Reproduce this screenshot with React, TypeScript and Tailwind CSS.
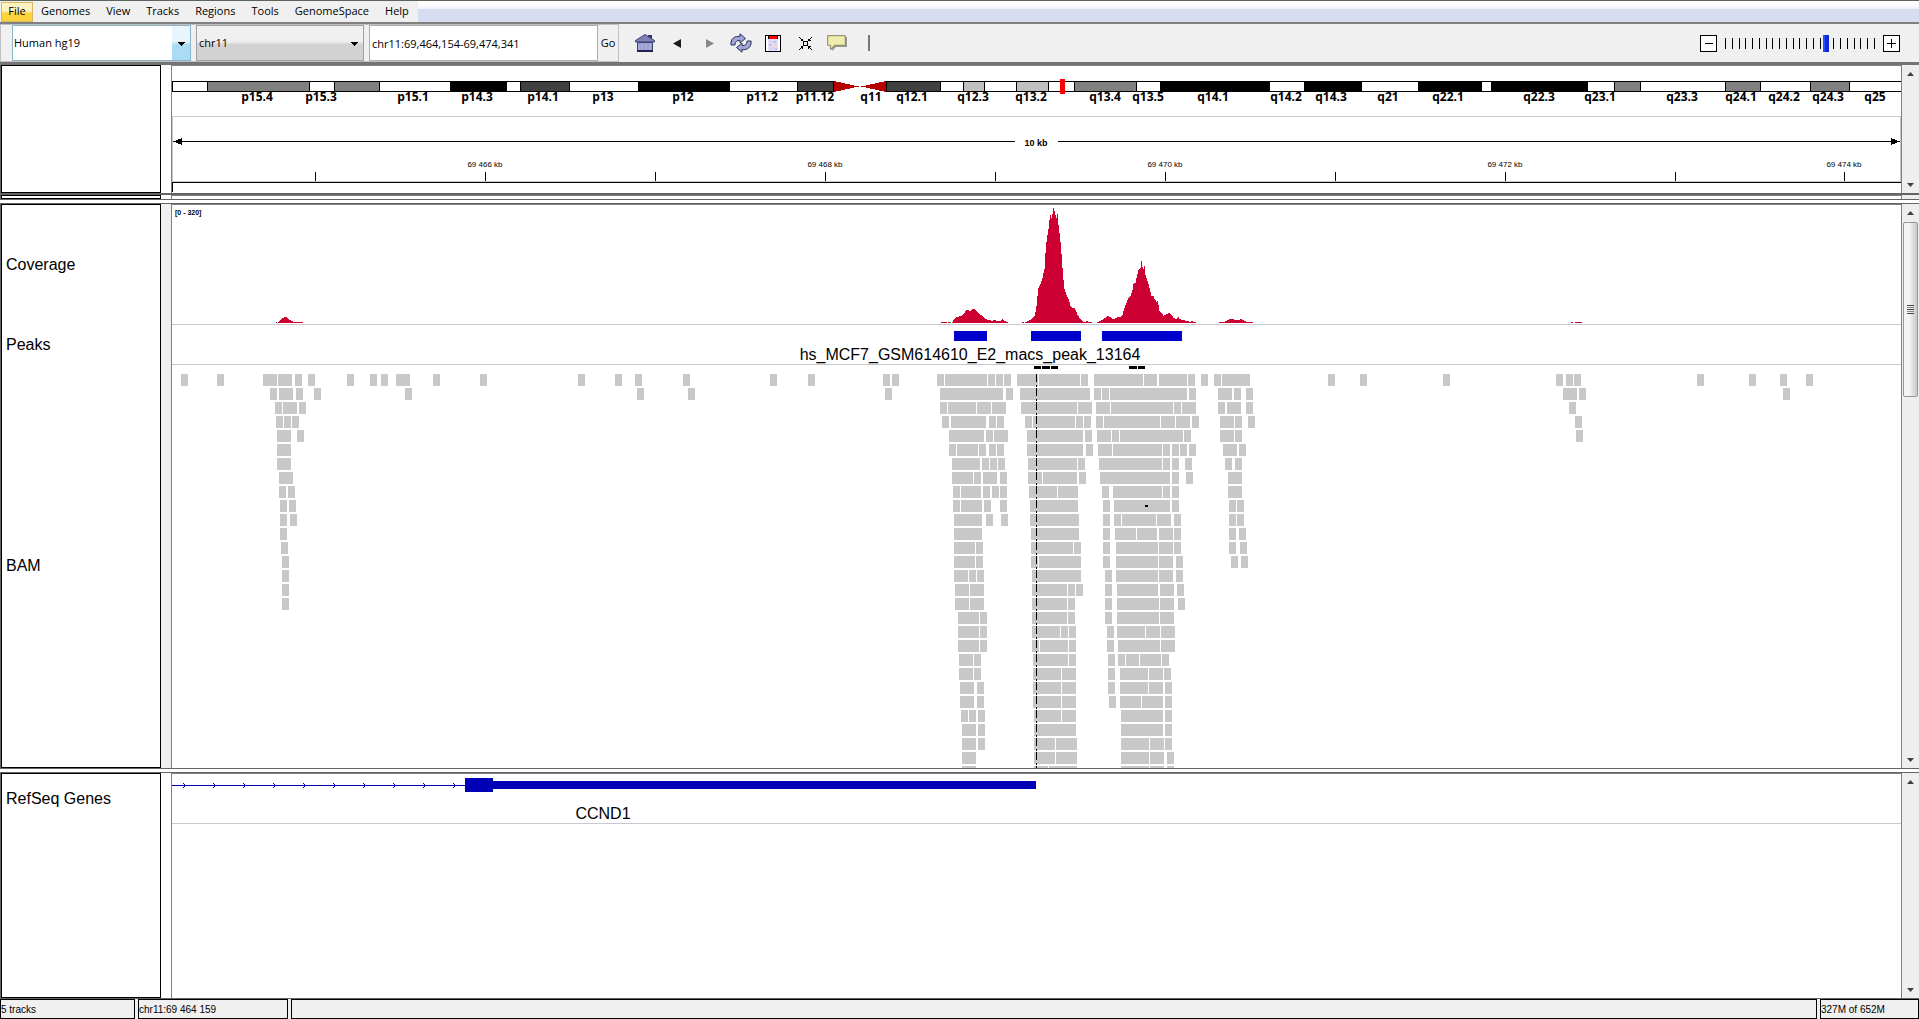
import type { ReactNode } from 'react';

// Genomic viewport: screen columns 172..1901 are mapped to percentages so tracks follow the window
const VIEW_START = 172;
const VIEW_WIDTH = 1729;

const at = (x: number) => `${((x - VIEW_START) / VIEW_WIDTH) * 100}%`;
const span = (w: number) => `${(w / VIEW_WIDTH) * 100}%`;

const menus = ['Genomes', 'View', 'Tracks', 'Regions', 'Tools', 'GenomeSpace', 'Help'];

// [start, end, stain]
const bands: [number, number, string][] = [
  [207, 310, '#808080'],
  [334, 380, '#808080'],
  [450, 507, '#000000'],
  [520, 570, '#404040'],
  [638, 730, '#000000'],
  [797, 834, '#404040'],
  [886, 941, '#404040'],
  [963, 985, '#c0c0c0'],
  [1016, 1049, '#c0c0c0'],
  [1074, 1137, '#808080'],
  [1160, 1270, '#000000'],
  [1304, 1362, '#000000'],
  [1418, 1482, '#000000'],
  [1491, 1588, '#000000'],
  [1614, 1641, '#808080'],
  [1725, 1761, '#808080'],
  [1810, 1850, '#808080'],
];

const bandLabels: [number, string][] = [
  [257, 'p15.4'], [321, 'p15.3'], [413, 'p15.1'], [477, 'p14.3'], [543, 'p14.1'], [603, 'p13'],
  [683, 'p12'], [762, 'p11.2'], [815, 'p11.12'], [871, 'q11'], [912, 'q12.1'], [973, 'q12.3'],
  [1031, 'q13.2'], [1105, 'q13.4'], [1148, 'q13.5'], [1213, 'q14.1'], [1286, 'q14.2'], [1331, 'q14.3'],
  [1388, 'q21'], [1448, 'q22.1'], [1539, 'q22.3'], [1600, 'q23.1'], [1682, 'q23.3'], [1741, 'q24.1'],
  [1784, 'q24.2'], [1828, 'q24.3'], [1875, 'q25'],
];

const rulerTicks: [number, string][] = [
  [315, ''], [485, '69 466 kb'], [655, ''], [825, '69 468 kb'], [995, ''],
  [1165, '69 470 kb'], [1335, ''], [1505, '69 472 kb'], [1675, ''], [1844, '69 474 kb'],
];

// [x, height] samples, interpolated between neighbours of the same run
const coverage: [number, number][][] = [
  [[276, 1], [276, 1]],
  [[278, 1], [279, 2], [280, 3], [281, 4], [283, 5], [285, 6], [287, 5], [289, 3], [291, 2], [293, 1], [302, 1]],
  [[941, 1], [946, 1]],
  [[948, 1], [950, 1]],
  [[952, 1], [953, 3], [955, 5], [957, 6], [961, 7], [963, 9], [966, 13], [970, 12], [972, 14], [974, 14], [976, 12],
    [979, 9], [982, 7], [985, 4], [988, 3], [992, 2], [994, 3], [996, 2], [1000, 2], [1002, 4], [1004, 2], [1007, 1]],
  [[1022, 1], [1023, 1]],
  [[1025, 1], [1028, 2], [1030, 3], [1032, 5], [1034, 7], [1035, 11], [1036, 17], [1037, 27], [1038, 35], [1040, 39],
    [1042, 45], [1044, 54], [1045, 70], [1046, 81], [1047, 88], [1048, 94], [1049, 103], [1050, 108], [1051, 105],
    [1052, 109], [1053, 115], [1054, 112], [1055, 108], [1056, 105], [1057, 109], [1058, 98], [1059, 90], [1060, 81],
    [1061, 69], [1062, 55], [1063, 43], [1064, 34], [1066, 28], [1068, 24], [1070, 17], [1072, 15], [1074, 15],
    [1075, 13], [1077, 8], [1079, 5], [1081, 3], [1083, 1], [1085, 1], [1087, 2], [1088, 1], [1091, 1]],
  [[1097, 1], [1100, 2], [1103, 4], [1105, 5], [1107, 7], [1110, 6], [1112, 4], [1114, 4], [1117, 6], [1120, 6],
    [1122, 8], [1124, 15], [1126, 20], [1128, 25], [1130, 27], [1132, 33], [1133, 39], [1135, 40], [1136, 45],
    [1138, 53], [1140, 55], [1141, 62], [1142, 56], [1143, 54], [1144, 57], [1145, 48], [1147, 42], [1149, 35],
    [1151, 27], [1153, 27], [1154, 24], [1156, 21], [1157, 22], [1158, 18], [1159, 12], [1161, 10], [1163, 7],
    [1165, 8], [1169, 10], [1171, 8], [1173, 5], [1176, 4], [1178, 6], [1179, 4], [1182, 3], [1186, 2], [1190, 1],
    [1191, 2], [1193, 1], [1195, 1]],
  [[1219, 1], [1224, 1], [1226, 2], [1229, 4], [1232, 4], [1234, 3], [1238, 3], [1241, 4], [1242, 3], [1244, 2], [1246, 1], [1252, 1]],
  [[1571, 1], [1572, 1]],
  [[1575, 1], [1581, 1]],
];

const columns = coverage.flatMap((run) => {
  const out: [number, number][] = [];
  run.forEach(([x, h], i) => {
    const next = run[i + 1];
    if (!next) {
      out.push([x, h]);
      return;
    }
    for (let c = x; c < next[0]; c++) {
      out.push([c, Math.round(h + ((next[1] - h) * (c - x)) / (next[0] - x))]);
    }
  });
  return out;
});

// Aligned reads, one string per packed row, as start-end pairs
const READ_OFFSET = 920;
const packedRows = [
  '17-24 25-67 68-75 76-83 84-91 97-118 119-160 161-168 174-223 224-237 239-267 268-275 281-288 294-301 302-330',
  '20-83 86-93 100-170 174-181 182-189 190-267 269-276 298-312 314-321 326-333',
  '20-27 28-56 57-71 72-86 101-157 158-172 176-190 191-253 254-261 262-276 298-305 307-321 326-333',
  '22-29 31-66 69-76 77-84 105-112 113-155 156-163 164-171 176-183 184-240 241-255 256-270 272-279 300-314 315-322 328-335',
  '29-64 66-73 74-88 107-163 165-172 177-191 192-199 200-263 264-271 300-314 315-322',
  '29-36 37-58 59-66 69-76 77-84 107-163 166-173 178-192 193-242 243-250 252-259 260-267 269-276 303-317 319-326',
  '32-60 62-69 70-77 78-85 108-157 158-165 179-242 243-250 252-259 265-272 305-312 315-322',
  '32-53 54-61 63-77 80-87 108-122 123-157 159-166 180-250 252-259 266-273 308-322',
  '33-40 41-61 63-70 72-79 80-87 109-137 138-158 182-189 193-242 243-250 252-259 308-322',
  '33-40 41-62 64-71 80-87 110-158 183-190 194-250 252-259 309-316 317-324',
  '34-62 66-73 81-88 110-159 183-190 194-201 202-236 237-251 254-261 309-316 317-324',
  '34-62 111-159 183-190 195-216 217-237 239-253 254-261 309-316 319-326',
  '34-55 56-63 111-153 154-161 183-190 196-238 239-253 254-261 309-316 320-327',
  '34-55 56-63 111-118 119-161 183-190 196-238 239-253 256-263 311-318 321-328',
  '34-48 49-56 57-64 112-161 185-192 196-238 239-253 256-263',
  '35-49 50-64 112-147 148-155 156-163 185-192 197-238 240-254 257-264',
  '35-49 50-64 112-147 148-155 185-192 197-239 240-254 258-265',
  '38-59 60-67 112-147 148-155 185-192 197-239 240-254',
  '38-59 60-67 112-140 141-148 149-156 187-194 197-225 226-240 241-255',
  '38-59 60-67 112-119 120-148 149-156 187-194 198-240 241-255',
  '39-53 54-61 113-148 149-156 188-195 198-205 206-219 220-241 242-249',
  '39-53 54-61 113-141 142-156 188-195 200-228 229-243 244-251',
  '40-54 57-64 113-141 142-156 188-195 200-228 229-243 245-252',
  '40-54 57-64 113-141 142-156 189-196 200-221 222-243 245-252',
  '41-48 49-56 58-65 114-141 142-156 201-243 245-252',
  '42-56 58-65 114-156 201-243 245-252',
  '42-56 58-65 114-135 136-157 201-229 230-244 245-252',
  '42-56 114-135 136-157 201-229 230-244 247-254',
  '42-56 114-128 129-157 201-229 230-244 247-254',
];

// Reads outside the three enriched regions: starts of single (7) and doubled (14) reads per row
const sparseSingles = [
  [181, 217, 295, 308, 347, 370, 381, 433, 480, 578, 615, 635, 683, 770, 808, 883, 892, 1328, 1360, 1443, 1556, 1566, 1574, 1697, 1749, 1780, 1806],
  [270, 296, 314, 405, 637, 688, 885, 1579, 1783],
  [275, 299, 1569],
  [276, 284, 292, 1575],
  [297, 1576],
  [], [], [],
  [279, 288], [280, 289], [280, 290], [280], [281], [282], [282], [282], [282],
];
const sparseDoubles = [[263, 278, 396], [279, 1563], [283], [], [277], [277], [277], [279]];

const reads: { x: number; w: number; row: number }[] = [
  ...packedRows.flatMap((line, row) =>
    line.split(' ').map((pair) => {
      const [start, end] = pair.split('-').map(Number);
      return { x: READ_OFFSET + start, w: end - start, row };
    })
  ),
  ...sparseSingles.flatMap((starts, row) => starts.map((x) => ({ x, w: 7, row }))),
  ...sparseDoubles.flatMap((starts, row) => starts.map((x) => ({ x, w: 14, row }))),
];

function ArrowDown({ className }: { className: string }) {
  return (
    <svg className={className} width="7" height="4" viewBox="0 0 7 4" shapeRendering="crispEdges">
      <path d="M0 0h7v1h-1v1h-1v1h-1v1h-1v-1h-1v-1h-1v-1h-1z" fill="#000" />
    </svg>
  );
}

function ToolButton({ label, children }: { label: string; children: ReactNode }) {
  return (
    <button type="button" aria-label={label} className="w-8 h-8 flex items-center justify-center">
      {children}
    </button>
  );
}

function MenuBar() {
  return (
    <nav className="h-6 flex-none flex border-t border-[#5c655c] border-b-2 border-b-[#808080] bg-linear-to-b from-[#fdfdff] from-20% via-[#eef1fa] via-38% to-[#d7ddf0] to-40% text-[11px] text-black">
      <div className="flex items-center bg-[#f0f0f0] px-px">
        <button type="button" className="h-5 w-8 border border-[#d8b860] bg-linear-to-b from-[#fdf3c0] from-45% to-[#fdd33c] to-55%">
          File
        </button>
        <div className="flex gap-4 px-2">
          {menus.map((menu) => (
            <button type="button" key={menu}>{menu}</button>
          ))}
        </div>
      </div>
    </nav>
  );
}

function ZoomSlider() {
  return (
    <div className="flex items-center gap-2 pr-[19px]">
      <button type="button" aria-label="Zoom out" className="w-[17px] h-[17px] border border-black bg-white flex items-center justify-center">
        <span className="w-2 h-px bg-black" />
      </button>
      <div className="relative w-[150px] h-[17px]">
        <svg className="absolute left-0 top-[3px] w-full h-[11px]" shapeRendering="crispEdges">
          {Array.from({ length: 23 }, (_, i) => (
            <rect key={i} x={Math.round(i * 6.77)} y="0" width="1" height="11" fill="#000" />
          ))}
        </svg>
        <input
          type="range"
          aria-label="Zoom level"
          min={0}
          max={22}
          defaultValue={15}
          className="absolute inset-0 w-full h-full appearance-none bg-transparent [&::-webkit-slider-thumb]:appearance-none [&::-webkit-slider-thumb]:w-[6px] [&::-webkit-slider-thumb]:h-[17px] [&::-webkit-slider-thumb]:bg-[#1428dc] [&::-webkit-slider-thumb]:border-l-2 [&::-webkit-slider-thumb]:border-[#2850ff]"
        />
      </div>
      <button type="button" aria-label="Zoom in" className="w-[17px] h-[17px] border border-black bg-white flex items-center justify-center">
        <svg width="9" height="9" shapeRendering="crispEdges">
          <path d="M4 0h1v4h4v1h-4v4h-1v-4h-4v-1h4z" fill="#000" />
        </svg>
      </button>
    </div>
  );
}

function Toolbar() {
  return (
    <div className="h-[41px] flex-none flex items-center bg-[#f0f0f0] border-b-[3px] border-[#747474] text-[11px] text-black">
      <div className="h-full flex items-center border border-[#c0c0c0] pl-[11px]">
        <div className="relative w-[179px] h-9 border border-[#8ab4cc] bg-white">
          <select aria-label="Genome" className="appearance-none w-full h-full px-px outline-none">
            <option>Human hg19</option>
          </select>
          <div className="pointer-events-none absolute right-0 inset-y-0 w-[18px] bg-linear-to-b from-[#e8f5fc] from-45% to-[#aadcf5] to-55%" />
          <ArrowDown className="pointer-events-none absolute right-[5px] top-4" />
        </div>
        <div className="relative w-[168px] h-9 ml-[5px] border border-[#a0a0a0] bg-linear-to-b from-[#f0f0f0] from-45% to-[#d2d2d2] to-55%">
          <select aria-label="Chromosome" className="appearance-none w-full h-full px-[2px] outline-none">
            <option>chr11</option>
          </select>
          <ArrowDown className="pointer-events-none absolute right-[5px] top-4" />
        </div>
        <input
          aria-label="Locus"
          defaultValue="chr11:69,464,154-69,474,341"
          className="w-[229px] h-9 ml-[5px] px-[2px] bg-white border border-[#abadb3] outline-none"
        />
        <button type="button" className="w-5 h-9">Go</button>
      </div>
      <div className="flex items-center pl-[10px]">
        <ToolButton label="Home">
          <svg width="22" height="18" viewBox="0 0 22 18">
            <path d="M14 1h4v5h-4z" fill="#34346a" />
            <path d="M11 .5 20.500 6.500v1.500h-19v-1.500z" fill="#7c80b4" stroke="#3c4070" />
            <path d="M3.500 8.500h15v9h-15z" fill="#9c9fd0" stroke="#3c4070" />
            <path d="M5 17v-6m3 6v-8m4 8v-8m4 8v-8" stroke="#b0b4e0" />
            <path d="M3 17h16" stroke="#20244c" strokeWidth="2" />
          </svg>
        </ToolButton>
        <ToolButton label="Back">
          <svg width="9" height="9"><path d="M0 4.500 8 0v9z" fill="#1c1c1c" /></svg>
        </ToolButton>
        <ToolButton label="Forward">
          <svg width="9" height="9"><path d="M9 4.500 1 0v9z" fill="#888" /></svg>
        </ToolButton>
        <ToolButton label="Refresh">
          <svg width="22" height="20" viewBox="0 0 22 20" fill="#a0a4d8" stroke="#2c3058" strokeLinejoin="round">
            <path d="M1 12C0 6 5 2.500 10 3.500V.8L15.500 5.500 10 10V7.500C7 7 5 9 5 12z" />
            <path d="M21 8C22 14 17 17.500 12 16.500v2.700L6.500 14.500 12 10v2.500C15 13 17 11 17 8z" />
          </svg>
        </ToolButton>
        <ToolButton label="Region of interest">
          <svg width="16" height="17" viewBox="0 0 16 17" shapeRendering="crispEdges">
            <path d="M0 0h16v17H0z" fill="#000" />
            <path d="M1 1h14v15H1z" fill="#fff" />
            <path d="M3 1h10v15H3z" fill="#dde0f8" />
            <path d="M4 6h3v2H4zM9 9h3v2H9zM5 12h4v2H5z" fill="#f8c8cc" />
            <path d="M8 6h3v2H8zM4 9h3v2H4zM10 13h2v2h-2z" fill="#b8c4f4" />
            <path d="M4 1h8v3H4z" fill="#f00" />
            <path d="M3 0h1v4H3zM12 0h1v4h-1z" fill="#000" />
          </svg>
        </ToolButton>
        <ToolButton label="Fit to window">
          <svg width="13" height="13" viewBox="0 0 13 13" fill="none" stroke="#000" shapeRendering="crispEdges">
            <path d="M4.500 4.500h4v4h-4z" />
            <path d="M0 0 4 4M13 0 9 4M0 13 4 9M13 13 9 9M1.500 3.500h2v-2M11.500 3.500h-2v-2M1.500 9.500h2v2M11.500 9.500h-2v2" />
          </svg>
        </ToolButton>
        <ToolButton label="Popup text">
          <svg width="20" height="16" viewBox="0 0 20 16">
            <path d="M2 2h18v10H9l-4 4z" fill="#989898" />
            <path d="M.7.700h17.600v9.600H7.500L3.500 14.500V10.300H.7z" fill="#f0ecae" stroke="#88865c" />
          </svg>
        </ToolButton>
        <div className="w-8 flex justify-center"><span className="w-[2px] h-4 bg-[#787878]" /></div>
      </div>
      <div className="flex-1" />
      <ZoomSlider />
    </div>
  );
}

function Ruler() {
  return (
    <svg className="block w-full h-[126px]" shapeRendering="crispEdges">
      <rect x="0" y="15" width="100%" height="11" fill="#000" />
      <rect x={at(173)} y="16" width={span(1728)} height="9" fill="#fff" />
      {bands.map(([start, end, fill]) => (
        <g key={start}>
          <rect x={at(start)} y="15" width={span(end - start)} height="11" fill="#000" />
          <rect x={at(start + 1)} y="16" width={span(end - start - 2)} height="9" fill={fill} />
        </g>
      ))}
      {/* Centromere */}
      <rect x={at(834)} y="15" width={span(52)} height="11" fill="#fff" />
      <svg x={at(834)} y="15" width={span(52)} height="11" viewBox="0 0 52 11" preserveAspectRatio="none">
        <path d="M0 0 25 5.500 0 11zM52 0 27 5.500 52 11z" fill="#b40000" />
      </svg>
      <rect x={at(1060)} y="13" width={span(5)} height="15" fill="#f00" />
      {bandLabels.map(([x, name]) => (
        <text key={name} x={at(x)} y="35" textAnchor="middle" className="text-xs font-bold font-['Open_Sans',sans-serif]">
          {name}
        </text>
      ))}

      <rect x="0" y="50" width="100%" height="1" fill="#c8c8d0" />
      <rect x={at(172)} y="51" width="1" height="64" fill="#c8c8d0" />
      <rect x={at(1900)} y="51" width="1" height="64" fill="#c8c8d0" />
      <rect x={at(174)} y="75" width={span(841)} height="1" fill="#000" />
      <rect x={at(1058)} y="75" width={span(841)} height="1" fill="#000" />
      <svg x={at(173)} y="72" width="9" height="7"><path d="M0 3.500 9 0v7z" /></svg>
      <svg x={at(1891)} y="72" width="9" height="7"><path d="M9 3.500 0 0v7z" /></svg>
      <text x={at(1036)} y="80" textAnchor="middle" className="text-[9px] font-bold font-['Liberation_Sans',sans-serif]">10 kb</text>

      {rulerTicks.map(([x, label]) => (
        <g key={x}>
          <rect x={at(x)} y="106" width="1" height="9" fill="#000" />
          <text x={at(x)} y="101" textAnchor="middle" className="text-[8px] font-['Liberation_Sans',sans-serif]">{label}</text>
        </g>
      ))}
      <rect x="0" y="115" width="100%" height="1" fill="#c8c8d0" />
      <rect x="0" y="116" width="100%" height="1" fill="#000" />
      <rect x="0" y="116" width="1" height="10" fill="#000" />
    </svg>
  );
}

function CoverageTrack() {
  return (
    <svg className="block w-full h-[119px]" shapeRendering="crispEdges">
      <text x={at(175)} y="10" className="text-[7px] font-bold font-['Liberation_Sans',sans-serif]">[0 - 320]</text>
      {columns.map(([x, h]) => (
        <rect key={x} x={at(x)} y={118 - h} width={span(1)} height={h} fill="#cc0033" />
      ))}
      <rect x={at(950)} y="117" width="1" height="1" fill="#0f0" />
    </svg>
  );
}

function PeaksTrack() {
  return (
    <svg className="block w-full h-[39px]" shapeRendering="crispEdges">
      {[[954, 33], [1031, 50], [1102, 80]].map(([x, w]) => (
        <rect key={x} x={at(x)} y="6" width={span(w)} height="10" fill="#0000cc" />
      ))}
      <text x={at(970)} y="35" textAnchor="middle" className="text-[16px] font-['Liberation_Sans',sans-serif]">
        hs_MCF7_GSM614610_E2_macs_peak_13164
      </text>
    </svg>
  );
}

function AlignmentTrack() {
  return (
    <svg className="block w-full h-full" shapeRendering="crispEdges">
      {[[1034, 7], [1042, 8], [1051, 7], [1129, 8], [1138, 7]].map(([x, w]) => (
        <rect key={x} x={at(x)} y="1" width={span(w)} height="3" fill="#000" />
      ))}
      {reads.map(({ x, w, row }) => (
        <rect key={`${row}-${x}`} x={at(x)} y={9 + row * 14} width={span(w)} height="12" fill="#c8c8c8" />
      ))}
      <rect x={at(1145)} y="140" width="3" height="2" fill="#000" />
      <svg x={at(1036)} y="9" width="1" height="100%">
        <path d="M.5 0V600" stroke="#000" strokeDasharray="8 3 2 1" />
      </svg>
    </svg>
  );
}

function GeneTrack() {
  return (
    <svg className="block w-full h-[49px]" shapeRendering="crispEdges">
      <rect x="0" y="11" width={span(293)} height="1" fill="#0000b4" />
      {Array.from({ length: 10 }, (_, i) => (
        <svg key={i} x={at(183 + i * 30)} y="9" width="3" height="5">
          <path d="M0 0h1v1h1v1h1v1h-1v1h-1v1h-1v-1h1v-1h1v-1h-1v-1h-1z" fill="#0000b4" />
        </svg>
      ))}
      <rect x={at(465)} y="4" width={span(28)} height="14" fill="#0000b4" />
      <rect x={at(493)} y="7" width={span(543)} height="8" fill="#0000b4" />
      <text x={at(603)} y="45" textAnchor="middle" className="text-[16px] font-['Liberation_Sans',sans-serif]">CCND1</text>
    </svg>
  );
}

function ScrollBar({ thumb }: { thumb?: boolean }) {
  return (
    <div className="w-[17px] flex-none flex flex-col items-center bg-[#eeeeee]">
      <button type="button" aria-label="Scroll up" className="w-full h-[18px] flex-none flex items-center justify-center">
        <svg width="7" height="4"><path d="M0 4 3.500 0 7 4z" fill="#404040" /></svg>
      </button>
      {thumb && (
        <div className="w-[15px] h-[175px] flex-none rounded-xs border border-[#979797] bg-linear-to-r from-[#f4f4f4] from-40% to-[#c8c8cc] flex flex-col items-center justify-center gap-px">
          <span className="w-[7px] h-px bg-[#444444]" />
          <span className="w-[7px] h-px bg-[#888888]" />
          <span className="w-[7px] h-px bg-[#444444]" />
          <span className="w-[7px] h-px bg-[#888888]" />
          <span className="w-[7px] h-px bg-[#444444]" />
        </div>
      )}
      <div className="flex-1" />
      <button type="button" aria-label="Scroll down" className="w-full h-[17px] flex-none flex items-center justify-center">
        <svg width="7" height="4"><path d="M0 0 3.500 4 7 0z" fill="#404040" /></svg>
      </button>
    </div>
  );
}

function Panel({ className, gutter = 'bg-white', names, scroll, children }: {
  className: string;
  gutter?: string;
  names?: ReactNode;
  scroll?: ReactNode;
  children?: ReactNode;
}) {
  return (
    <div className={`flex pl-px ${className}`}>
      <div className="w-40 flex-none bg-white border border-black overflow-hidden">{names}</div>
      <div className={`w-[10px] flex-none ${gutter}`} />
      <div className="flex-1 min-w-0 bg-white border-t border-x border-[#808080] overflow-hidden flex flex-col">{children}</div>
      {scroll ?? <div className="w-[17px] flex-none bg-[#eeeeee]" />}
    </div>
  );
}

function TrackName({ className, children }: { className: string; children: ReactNode }) {
  return <div className={`flex items-center pl-1 text-base ${className}`}>{children}</div>;
}

function Splitter() {
  return <div className="h-[5px] flex-none bg-white border-y border-[#646464]" />;
}

export default function App() {
  return (
    <div className="h-screen flex flex-col overflow-hidden bg-[#646464] text-black font-['Open_Sans',sans-serif]">
      <MenuBar />
      <Toolbar />

      <Panel className="h-32 flex-none" scroll={<ScrollBar />}>
        <Ruler />
      </Panel>
      <div className="h-[2px] flex-none" />
      <Panel className="h-1 flex-none" />
      <Splitter />

      <Panel
        className="h-[564px] flex-none font-['Liberation_Sans',sans-serif]"
        gutter="bg-[#f0f0f0]"
        scroll={<ScrollBar thumb />}
        names={
          <div className="h-full flex flex-col">
            <TrackName className="h-[120px]">Coverage</TrackName>
            <TrackName className="h-10">Peaks</TrackName>
            <TrackName className="flex-1">BAM</TrackName>
          </div>
        }
      >
        <div className="flex-none border-b border-[#c8c8d0]"><CoverageTrack /></div>
        <div className="flex-none border-b border-[#c8c8d0]"><PeaksTrack /></div>
        <div className="flex-1 min-h-0"><AlignmentTrack /></div>
      </Panel>
      <Splitter />

      <Panel
        className="flex-1 min-h-0 font-['Liberation_Sans',sans-serif]"
        scroll={<ScrollBar />}
        names={<TrackName className="h-[50px]">RefSeq Genes</TrackName>}
      >
        <div className="flex-none border-b border-[#c8c8d0]"><GeneTrack /></div>
      </Panel>

      <footer className="h-[21px] flex-none flex gap-[3px] border-t border-[#646464] bg-[#f0f0f0] text-[10px] font-['Liberation_Sans',sans-serif]">
        <div className="w-[135px] border border-black flex items-center">5 tracks</div>
        <div className="w-[150px] border border-black flex items-center">chr11:69 464 159</div>
        <div className="flex-1 border border-black" />
        <div className="w-[99px] border border-black flex items-center">327M of 652M</div>
      </footer>
    </div>
  );
}
